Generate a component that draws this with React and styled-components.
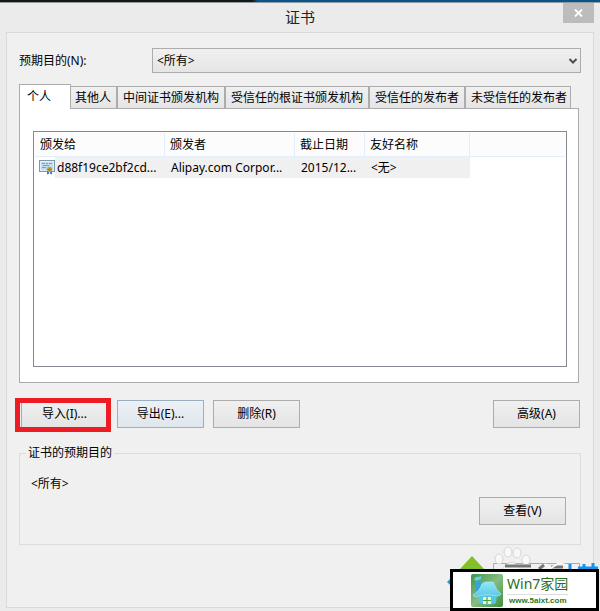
import { useState } from "react";
import styled, { createGlobalStyle } from "styled-components";

const tabs = [
  "个人",
  "其他人",
  "中间证书颁发机构",
  "受信任的根证书颁发机构",
  "受信任的发布者",
  "未受信任的发布者",
];

const certificates = [
  {
    subject: "d88f19ce2bf2cd...",
    issuer: "Alipay.com Corpor...",
    expires: "2015/12...",
    name: "<无>",
  },
];

const CertificateIcon = () => (
  <svg width="16" height="15" viewBox="0 0 16 15" aria-hidden="true">
    <rect x="0.5" y="0.5" width="15" height="11" fill="#c3dcf0" stroke="#7f98a8" />
    <rect x="1.5" y="1.5" width="13" height="9" fill="none" stroke="#e0effa" />
    <path d="M3 3.5h3M7 3.500h2M10 3.500h3M4 5.500h6M3 7.500h4" stroke="#7f96dc" />
    <path d="M8 10v4.500l2.500-1 2.500 1V10z" fill="#2f7be0" />
    <path d="M10.5 11v3" stroke="#fff" />
    <circle cx="10.5" cy="9.5" r="2.8" fill="#c6a23c" />
    <circle cx="10.5" cy="9.5" r="1.3" fill="#a58228" />
  </svg>
);

const HouseLogo = () => (
  <svg width="32" height="33" viewBox="0 0 32 33" aria-hidden="true">
    <defs>
      <linearGradient id="leaf" x1="0" y1="0" x2="1" y2="1">
        <stop offset="0" stopColor="#3f9447" />
        <stop offset="0.5" stopColor="#86bd83" />
        <stop offset="1" stopColor="#3f8f3c" />
      </linearGradient>
      <linearGradient id="roof" x1="0" y1="0" x2="0" y2="1">
        <stop offset="0" stopColor="#8ee9f7" />
        <stop offset="1" stopColor="#5bc4e8" />
      </linearGradient>
    </defs>
    <rect width="32" height="33" rx="2" fill="url(#leaf)" />
    <path d="M5 8h5v9H5z" fill="#35a5d8" />
    <path d="M3 5q2-3 5-2l2-1q1 3-2 4-4 2-5-1z" fill="#5fd0ee" />
    <path d="M7 19h19l-1 10q-8 3-17 0z" fill="#58c5e2" />
    <path
      d="M2 21q6-3 9-11 2-2 5-2t6 0q3 8 8 12-1 2-4 2-11-3-22 1z"
      fill="url(#roof)"
      stroke="#b4f2f9"
      strokeWidth="0.6"
    />
    <rect x="12" y="23" width="8" height="7" rx="1" fill="#e9ffc5" />
    <path d="M16 23v7M12 26.500h8" stroke="#3fa44c" strokeWidth="1.2" />
  </svg>
);

const StampArt = () => (
  <svg width="154" height="66" viewBox="0 0 154 66" aria-hidden="true">
    <path d="M26 11l12 13H14z" fill="#83bf27" />
    <path d="M1 37l5-5v10z" fill="#16a0e8" />
    <path d="M47.5 30V18.5h86V30" fill="none" stroke="#aaa" />
    <g fill="#f8f8f8" stroke="#d6d6d6">
      <ellipse cx="53" cy="14" rx="4" ry="5" />
      <ellipse cx="62" cy="7" rx="4" ry="5" />
      <ellipse cx="71" cy="8" rx="4" ry="5" />
      <ellipse cx="80" cy="15" rx="4" ry="5" />
      <path d="M54 28q3-6 7-9 5-4 10 1l7 8z" />
    </g>
    <path d="M59 21h26M93 24l5-4M105 22h12" stroke="#777" strokeWidth="3" />
    <path d="M99 19l6 4 8-5 10 3" stroke="#f8f8f8" strokeWidth="2" fill="none" />
    <path d="M124 19v6M132 23h20M138 19v4M147 18v5" stroke="#1593ee" strokeWidth="3" />
  </svg>
);

export default function App() {
  const [activeTab, setActiveTab] = useState(0);

  return (
    <>
      <GlobalStyle />
      <Window>
        <Backdrop />
        <TitleBar>
          <Title>证书</Title>
          <CloseButton type="button" aria-label="关闭">
            <svg width="9" height="8" viewBox="0 0 9 8" aria-hidden="true">
              <path d="M1 0.5l7 7M8 0.5l-7 7" stroke="#fff" strokeWidth="1.8" />
            </svg>
          </CloseButton>
        </TitleBar>
        <Body>
          <PurposeRow>
            <PurposeLabel htmlFor="purpose">预期目的(N):</PurposeLabel>
            <SelectBox>
              <Select id="purpose">
                <option>{"<所有>"}</option>
              </Select>
              <Chevron width="8" height="6" viewBox="0 0 8 6" aria-hidden="true">
                <path d="M0.5 1L4 4.5 7.5 1" fill="none" stroke="#505050" strokeWidth="2" />
              </Chevron>
            </SelectBox>
          </PurposeRow>

          <TabList role="tablist">
            {tabs.map((tab, index) => (
              <Tab
                key={tab}
                type="button"
                role="tab"
                aria-selected={index === activeTab}
                $active={index === activeTab}
                onClick={() => setActiveTab(index)}
              >
                {tab}
              </Tab>
            ))}
          </TabList>
          <TabPage role="tabpanel">
            <ListView>
              <Table>
                <colgroup>
                  <Col $width={130} />
                  <Col $width={130} />
                  <Col $width={70} />
                  <Col $width={105} />
                  <col />
                </colgroup>
                <thead>
                  <tr>
                    <HeadCell>颁发给</HeadCell>
                    <HeadCell>颁发者</HeadCell>
                    <HeadCell>截止日期</HeadCell>
                    <HeadCell>友好名称</HeadCell>
                    <HeadCell as="td" />
                  </tr>
                </thead>
                <tbody>
                  {certificates.map((item) => (
                    <tr key={item.subject}>
                      <SubjectCell>
                        <Subject>
                          <CertificateIcon />
                          <SubjectText>{item.subject}</SubjectText>
                        </Subject>
                      </SubjectCell>
                      <Cell>{item.issuer}</Cell>
                      <Cell>{item.expires}</Cell>
                      <Cell>{item.name}</Cell>
                      <td />
                    </tr>
                  ))}
                </tbody>
              </Table>
            </ListView>
          </TabPage>

          <Actions>
            <Marked>
              <Button type="button">导入(I)...</Button>
            </Marked>
            <Button type="button" $hot>
              导出(E)...
            </Button>
            <Button type="button">删除(R)</Button>
            <Spacer />
            <Button type="button">高级(A)</Button>
          </Actions>

          <Group>
            <Legend>证书的预期目的</Legend>
            <GroupText>{"<所有>"}</GroupText>
            <GroupFooter>
              <Button type="button">查看(V)</Button>
            </GroupFooter>
          </Group>
        </Body>

        <Stamp>
          <StampArt />
          <Banner>
            <HouseLogo />
            <BannerText>
              <BannerName>Win7家园</BannerName>
              <BannerUrl>www.5aixt.com</BannerUrl>
            </BannerText>
          </Banner>
        </Stamp>
      </Window>
    </>
  );
}

const GlobalStyle = createGlobalStyle`
  * {
    box-sizing: border-box;
  }
  body {
    margin: 0;
    background: #ebebeb;
  }
  body, button, select {
    font-family: "Noto Sans", "Noto Sans CJK SC", sans-serif;
    font-size: 12px;
    line-height: 16px;
    color: #000;
  }
`;

const Window = styled.main`
  position: relative;
  display: flex;
  flex-direction: column;
  min-height: 100vh;
  padding: 0 6px 3px;
  background: #ebebeb;
`;

const Backdrop = styled.div`
  height: 3px;
  margin: 0 -6px;
  background: linear-gradient(90deg, #16170f 0 42%, #0b5586 43%);
  border-bottom: 1px solid #8f9ba6;
`;

const TitleBar = styled.header`
  display: grid;
  grid-template-columns: 1fr auto 1fr;
  align-items: start;
  height: 29px;
`;

const Title = styled.h1`
  grid-column: 2;
  margin: 2px 0 0;
  font-size: 15px;
  font-weight: 400;
  line-height: 24px;
  color: #222;
`;

const CloseButton = styled.button`
  display: flex;
  align-items: center;
  justify-content: center;
  justify-self: end;
  width: 31px;
  height: 20px;
  padding: 0;
  border: 0;
  background: #bcbcbc;
`;

const Body = styled.section`
  flex: 1;
  padding: 15px 12px;
  border: 1px solid #d9d9d9;
  background: #f0f0f0;
`;

const PurposeRow = styled.div`
  display: flex;
  align-items: center;
`;

const PurposeLabel = styled.label`
  width: 133px;
`;

const SelectBox = styled.div`
  position: relative;
  flex: 1;
`;

const Select = styled.select`
  display: block;
  width: 100%;
  height: 25px;
  padding: 0 4px;
  border: 1px solid #acacac;
  border-radius: 0;
  appearance: none;
  background: linear-gradient(#f0f0f0, #e5e5e5);
`;

const Chevron = styled.svg`
  position: absolute;
  top: 10px;
  right: 4px;
  pointer-events: none;
`;

const TabList = styled.div`
  display: flex;
  align-items: flex-end;
  margin-top: 11px;
`;

const Tab = styled.button`
  position: relative;
  height: ${({ $active }) => ($active ? 25 : 22)}px;
  margin: ${({ $active }) => ($active ? "0 -2px -1px 0" : "0")};
  padding: ${({ $active }) => ($active ? "0 19px 1px 7px" : "0 5px")};
  border: 1px solid #acacac;
  border-bottom: 0;
  z-index: ${({ $active }) => ($active ? 1 : 0)};
  background: ${({ $active }) =>
    $active ? "#fff" : "linear-gradient(#f0f0f0, #e5e5e5)"};
  white-space: nowrap;

  &:last-child {
    padding-right: 3px;
  }
`;

const TabPage = styled.div`
  margin-right: 2px;
  padding: 22px 11px 15px 13px;
  border: 1px solid #acacac;
  background: #fff;
`;

const ListView = styled.div`
  height: 236px;
  padding: 1px;
  border: 1px solid #828790;
  background: #fff;
`;

const Table = styled.table`
  width: 100%;
  table-layout: fixed;
  border-spacing: 0;
`;

const Col = styled.col`
  width: ${({ $width }) => $width}px;
`;

const HeadCell = styled.th`
  height: 24px;
  padding: 0 5px;
  border-bottom: 1px solid #e3eefb;
  border-right: 1px solid #e3eefb;
  background: #fcfcfc;
  font-weight: 400;
  text-align: left;

  &:last-child {
    border-right: 0;
  }
`;

const Cell = styled.td`
  height: 21px;
  padding: 0 6px;
  background: #f0f0f0;
  white-space: nowrap;
`;

const SubjectCell = styled(Cell)`
  padding: 0;
  background: #fff;
`;

const Subject = styled.div`
  display: flex;
  align-items: center;
  padding-left: 4px;
`;

const SubjectText = styled.span`
  flex: 1;
  padding-left: 2px;
  line-height: 21px;
  background: #f0f0f0;
`;

const Actions = styled.div`
  display: flex;
  gap: 9px;
  margin: 17px 1px 0 0;
`;

const Spacer = styled.div`
  flex: 1;
`;

const Button = styled.button`
  width: 87px;
  height: 28px;
  padding: 0;
  border: 1px solid ${({ $hot }) => ($hot ? "#9aafc4" : "#acacac")};
  background: ${({ $hot }) =>
    $hot
      ? "linear-gradient(#ecf1f6, #dfe6ed)"
      : "linear-gradient(#f0f0f0, #e4e4e4)"};
`;

/* red frame drawn round the button to press */
const Marked = styled.div`
  position: relative;
  padding-left: 2px;

  &::after {
    content: "";
    position: absolute;
    inset: -2px -3px -4px -4px;
    border: 5px solid #ed1c24;
    pointer-events: none;
  }
`;

const Group = styled.fieldset`
  min-width: 0;
  margin: 17px 0 0;
  padding: 15px 14px 19px 11px;
  border: 1px solid #dcdcdc;
`;

const Legend = styled.legend`
  margin-left: -5px;
  padding: 0 2px;
`;

const GroupText = styled.p`
  margin: 0;
`;

const GroupFooter = styled.div`
  display: flex;
  justify-content: flex-end;
  margin-top: 5px;
`;

const Stamp = styled.aside`
  position: absolute;
  right: 0;
  bottom: 0;
  width: 154px;
  height: 66px;
`;

const Banner = styled.div`
  position: absolute;
  right: 1px;
  bottom: 0;
  display: flex;
  align-items: center;
  width: 149px;
  height: 42px;
  padding-left: 18px;
  border: 3px solid #000;
  background: #fff;
`;

const BannerText = styled.div`
  margin-left: 4px;
`;

const BannerName = styled.div`
  border-bottom: 1px solid #ddd;
  font-size: 14px;
  line-height: 20px;
  color: #2c6e1c;
`;

const BannerUrl = styled.div`
  padding-left: 2px;
  font-family: "Liberation Sans", sans-serif;
  font-size: 8px;
  font-weight: 700;
  line-height: 12px;
  color: #2c7a1c;
`;
